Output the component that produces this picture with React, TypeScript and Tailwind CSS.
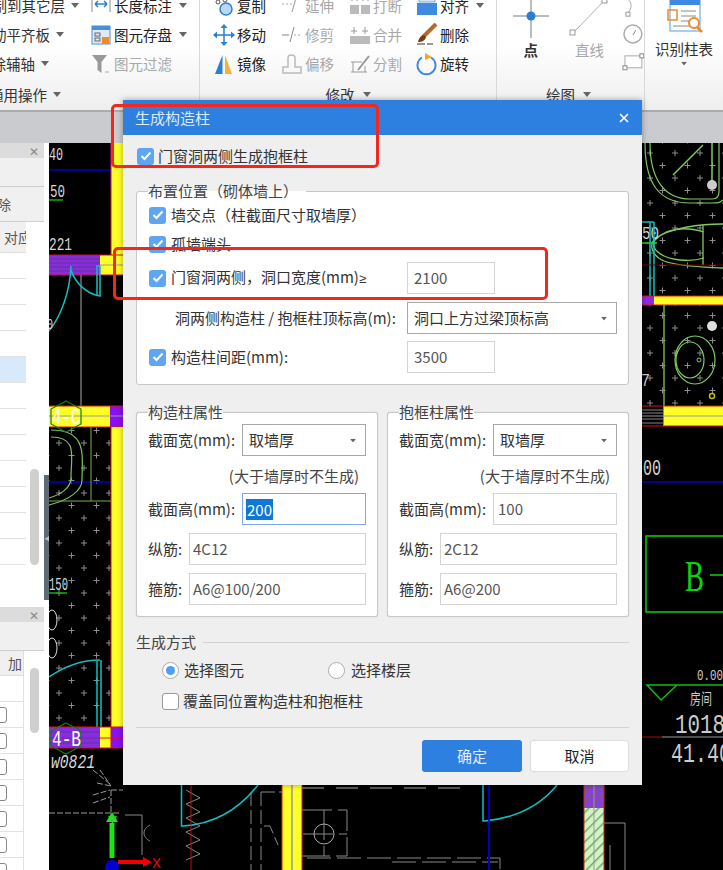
import React from "react";

const Caret = ({ className = "" }: { className?: string }) => (
  <svg width="8" height="5" viewBox="0 0 8 5" className={`shrink-0 ${className}`}>
    <path d="M0 0h8L4 5z" fill="#666" />
  </svg>
);

const Check = () => (
  <span className="flex h-[17px] w-[17px] shrink-0 items-center justify-center rounded-[3px] bg-[#5ea6f2]">
    <svg width="12" height="10" viewBox="0 0 12 10">
      <path d="M1.5 5l3 3 6-6.5" fill="none" stroke="#fff" strokeWidth="2" />
    </svg>
  </span>
);

const Field = ({ w, children, active }: { w: string; children?: React.ReactNode; active?: boolean }) => (
  <div
    className={`flex h-[32px] items-center border bg-white pl-[3px] text-[#555] ${w} ${
      active ? "border-[#7ea6e8]" : "border-[#d4d4d4]"
    }`}
  >
    {children}
  </div>
);

const Select = ({ w, children }: { w: string; children: React.ReactNode }) => (
  <div className={`flex h-[32px] items-center justify-between border border-[#a8a8a8] bg-white pl-[6px] pr-[8px] ${w}`}>
    <span className="text-[#333]">{children}</span>
    <Caret className="scale-75" />
  </div>
);

const Prop = ({
  title,
  height,
  main,
  stir,
  active,
  grow,
}: {
  title: string;
  height: string;
  main: string;
  stir: string;
  active?: boolean;
  grow: string;
}) => (
  <div className={`relative h-[205px] rounded-[3px] border border-[#c8c8c8] bg-white px-[11px] pt-[11px] shadow-[0_0_1px_#bbb] ${grow}`}>
    <span className="absolute left-[11px] top-[-12px] bg-gradient-to-b from-[#efefef] from-50% to-white to-50% leading-[22px] text-[#444]">
      {title}
    </span>
    <div className="flex items-center justify-between">
      <span>截面宽(mm):</span>
      <Select w="w-[124px]">取墙厚</Select>
    </div>
    <div className="mt-[6px] flex h-[28px] items-center justify-end pr-[7px] text-[#444]">(大于墙厚时不生成)</div>
    <div className="mt-[3px] flex items-center justify-between">
      <span>截面高(mm):</span>
      <Field w="w-[124px]" active={active}>
        {active ? (
          <span className="bg-[#0f78d4] px-[1px] leading-[21px] text-white">{height}</span>
        ) : (
          <span className="pl-[1px]">{height}</span>
        )}
      </Field>
    </div>
    <div className="mt-[8px] flex items-center justify-between">
      <span>纵筋:</span>
      <Field w="w-[177px]">{main}</Field>
    </div>
    <div className="mt-[8px] flex items-center justify-between">
      <span>箍筋:</span>
      <Field w="w-[177px]">{stir}</Field>
    </div>
  </div>
);

const RTool = ({
  icon,
  label,
  gray,
  caret,
  className = "",
}: {
  icon: React.ReactNode;
  label: string;
  gray?: boolean;
  caret?: boolean;
  className?: string;
}) => (
  <div className={`flex h-[29px] items-center ${className}`}>
    <span className="flex h-[22px] w-[24px] shrink-0 items-center justify-center">{icon}</span>
    <span className={`ml-[1px] whitespace-nowrap ${gray ? "text-[#a8a8a8]" : "text-[#222]"}`}>{label}</span>
    {caret && <Caret className="ml-[7px]" />}
  </div>
);

const IconLen = () => (
  <svg width="20" height="20" viewBox="0 0 20 20">
    <path d="M1 2v14M19 2v14" stroke="#888" />
    <path d="M4 8h12M4 8l3-3M4 8l3 3M16 8l-3-3M16 8l-3 3" stroke="#2a7fd4" strokeWidth="1.5" fill="none" />
  </svg>
);
const IconSave = () => (
  <svg width="20" height="20" viewBox="0 0 20 20">
    <rect x="1" y="1" width="18" height="18" fill="#dfeaf7" stroke="#4a90d9" />
    <rect x="1" y="1" width="18" height="4" fill="#4a90d9" />
    <rect x="4" y="8" width="5" height="3" fill="none" stroke="#666" />
    <rect x="4" y="13" width="5" height="3" fill="none" stroke="#666" />
    <rect x="11" y="12" width="7" height="7" fill="#f08a24" />
  </svg>
);
const IconFilter = () => (
  <svg width="20" height="20" viewBox="0 0 20 20">
    <path d="M1 1h15l-5.500 7v11l-4-3V8z" fill="#999" />
    <path d="M14 18h4" stroke="#aaa" />
  </svg>
);
const IconCopy = () => (
  <svg width="20" height="20" viewBox="0 0 20 20">
    <circle cx="12" cy="13" r="6" fill="#bcd7f2" stroke="#2f7fcf" strokeWidth="1.5" />
    <circle cx="11" cy="4" r="2" fill="none" stroke="#555" />
    <circle cx="4" cy="6" r="2" fill="none" stroke="#555" />
  </svg>
);
const IconMove = () => (
  <svg width="22" height="22" viewBox="0 0 22 22">
    <path d="M11 4v14M4 11h14" stroke="#2a7fd4" strokeWidth="1.5" />
    <path d="M11 0l3.500 4h-7zM11 22l3.500-4h-7zM0 11l4-3.500v7zM22 11l-4-3.500v7z" fill="#2a7fd4" />
  </svg>
);
const IconMirror = () => (
  <svg width="22" height="22" viewBox="0 0 22 22">
    <path d="M9.500 2v19H2z" fill="#2a7fd4" />
    <path d="M12 2v19h7z" fill="#f5b335" />
  </svg>
);
const IconExtend = () => (
  <svg width="22" height="22" viewBox="0 0 22 22">
    <path d="M1 9h11" stroke="#aaa" strokeDasharray="2 2" />
    <path d="M15 3l5-3M15 3l-4 14" stroke="#999" fill="none" />
  </svg>
);
const IconTrim = () => (
  <svg width="22" height="22" viewBox="0 0 22 22">
    <path d="M1 11h7" stroke="#888" />
    <path d="M13 11h8" stroke="#aaa" strokeDasharray="2 2" />
    <path d="M13 3l-4 15" stroke="#888" />
  </svg>
);
const IconOffset = () => (
  <svg width="22" height="22" viewBox="0 0 22 22">
    <path d="M2 20v-6h5V5c0-4 7-4 7 0v9h6v6z" fill="none" stroke="#bbb" strokeWidth="1.5" />
  </svg>
);
const IconBreak = () => (
  <svg width="22" height="22" viewBox="0 0 22 22">
    <rect x="1" y="10" width="9" height="9" fill="#bbb" />
    <rect x="12" y="10" width="9" height="9" fill="#bbb" />
    <path d="M3 3v4M8 3v4M14 3v4M19 3v4" stroke="#999" strokeDasharray="1 1" />
  </svg>
);
const IconMerge = () => (
  <svg width="22" height="22" viewBox="0 0 22 22">
    <rect x="1" y="12" width="20" height="8" fill="#bbb" />
    <path d="M5 3v7M2 7h6M16 3v7M13 7h6" stroke="#999" />
  </svg>
);
const IconSplit = () => (
  <svg width="22" height="22" viewBox="0 0 22 22">
    <path d="M2 9h11M2 19h16M4 9v10M16 13v6" stroke="#999" fill="none" />
    <path d="M9 17L20 3" stroke="#999" strokeWidth="2" />
  </svg>
);
const IconAlign = () => (
  <svg width="22" height="26" viewBox="0 0 22 26">
    <rect x="3" y="0" width="16" height="9" fill="#d5e5f6" stroke="#7aa9d9" />
    <rect x="1" y="10" width="20" height="12" fill="#3d8ae0" />
  </svg>
);
const IconDelete = () => (
  <svg width="22" height="24" viewBox="0 0 22 24">
    <path d="M20 1L7 14" stroke="#b56a28" strokeWidth="4" />
    <path d="M8 12c-3 0-5 3-6 7 4 0 7-1 8-5z" fill="#7a3b10" />
    <path d="M1 21h16" stroke="#333" strokeDasharray="8 2" />
  </svg>
);
const IconRotate = () => (
  <svg width="22" height="24" viewBox="0 0 22 24">
    <path d="M6 5.500a9 9 0 1 0 9 0" fill="none" stroke="#3d8ae0" strokeWidth="2" />
    <path d="M9 1l7 4-7 3z" fill="#f5a623" />
  </svg>
);

const plainRows = [253, 280, 306, 332, 359, 385, 411, 437, 463, 490, 516, 542];

const T = ({
  x,
  y,
  w,
  s,
  fill = "#d8d8d8",
  children,
  className,
}: {
  x: number;
  y: number;
  w: number;
  s: number;
  fill?: string;
  children: string;
  className?: string;
}) => (
  <text x={x} y={y} fontSize={s} fill={fill} textLength={w} lengthAdjust="spacingAndGlyphs" className={className}>
    {children}
  </text>
);

const Cad = () => (
  <svg width="674" height="727" viewBox="49 143 674 727" className="block font-['Liberation_Mono',monospace]">
    <defs>
      <pattern id="plusL" x="53" y="512" width="25" height="25" patternUnits="userSpaceOnUse">
        <path d="M6 3v6M3 6h6M18.500 15.500v6M15.500 18.500h6" stroke="#8c8c8c" />
      </pattern>
      <pattern id="plusR" x="644" y="147" width="25" height="25" patternUnits="userSpaceOnUse">
        <path d="M6 3v6M3 6h6M18.500 15.500v6M15.500 18.500h6" stroke="#8c8c8c" />
      </pattern>
      <pattern id="hatchG" width="7" height="7" patternUnits="userSpaceOnUse" patternTransform="rotate(45)">
        <rect width="7" height="7" fill="#d8f0c8" />
        <path d="M0 0v7" stroke="#5fb35f" strokeWidth="3" />
      </pattern>
      <pattern id="hatchP" width="7" height="7" patternUnits="userSpaceOnUse" patternTransform="rotate(45)">
        <rect width="7" height="7" fill="#8a3fd8" />
        <path d="M0 0v7" stroke="#6a6a3a" strokeWidth="2" />
      </pattern>
    </defs>
    <rect x="49" y="143" width="674" height="727" fill="#000" />
    <rect x="49" y="427" width="62" height="298" fill="url(#plusL)" />
    <rect x="642" y="143" width="81" height="153" fill="url(#plusR)" />
    <rect x="642" y="305" width="81" height="101" fill="url(#plusR)" />

    {/* left walls */}
    <path d="M49 170H111M111 143V187M49 482H122" stroke="#0000c8" strokeWidth="1.5" fill="none" />
    <rect x="111" y="143" width="12" height="112" fill="#ffff28" />
    <path d="M111 143V255" stroke="#e01010" />
    <rect x="49" y="255" width="51" height="20" fill="#8a2be2" />
    <path d="M49 259H100M49 263H100M49 267H100M49 271H100" stroke="#5a3a8a" />
    <rect x="100" y="255" width="23" height="20" fill="#ffff28" />
    <path d="M49 255H123M49 275H123" stroke="#c01030" />
    <path d="M100 265H123" stroke="#999" />
    <path d="M81 275V406" stroke="#aaa" />
    <path d="M71 266C70 290 62 315 49 331" stroke="#10c0c0" strokeWidth="1.5" fill="none" />
    <path d="M71 270C76 285 88 294 100 296V266H97V296" stroke="#10c0c0" strokeWidth="1.5" fill="none" />
    <path d="M49 200H63M49 593H67" stroke="#10b010" strokeWidth="1.5" />
    <rect x="49" y="406" width="61" height="21" fill="#ffff28" />
    <rect x="110" y="406" width="13" height="21" fill="#8a10f0" />
    <path d="M49 406H123M49 427H123" stroke="#e01010" />
    <path d="M49 416H123" stroke="#999" />
    <rect x="111" y="427" width="12" height="300" fill="#ffff28" />
    <path d="M111 427V727" stroke="#e01010" />
    <path d="M51 430C88 430 82 456 82 480C82 490 70 500 49 505M51 437C78 437 71 456 71 478C71 488 60 495 49 498" stroke="#80c060" strokeWidth="1.2" fill="none" />
    <path d="M91 427V501M49 501H111" stroke="#70b050" fill="none" />
    <path d="M66 401L81 409V424L66 432L51 424V409Z" stroke="#108010" strokeWidth="1.2" fill="none" />
    <T x={52} y={424} w={28} s={22} fill="#fff">4-C</T>
    <T x={49} y={160} w={14} s={19}>40</T>
    <T x={50} y={197} w={15} s={18}>50</T>
    <T x={49} y={250} w={23} s={19}>221</T>
    <T x={49} y={590} w={19} s={18}>150</T>
    <T x={47} y={329} w={6} s={15}>0</T>
    <ellipse cx="52" cy="620" rx="5" ry="10" stroke="#ddd" fill="none" />
    <ellipse cx="52" cy="648" rx="5" ry="10" stroke="#ddd" fill="none" />
    <path d="M49 677C65 666 82 660 100 660H97V737H101V660" stroke="#10c0c0" strokeWidth="1.5" fill="none" />
    <rect x="49" y="727" width="51" height="21" fill="#8a2be2" />
    <path d="M49 732H100M49 738H100M49 743H100" stroke="#5a3a8a" />
    <rect x="100" y="727" width="11" height="21" fill="#ffff28" />
    <rect x="111" y="727" width="12" height="21" fill="#8a10f0" />
    <path d="M49 727H123M49 748H123M100 738H123M111 727V748" stroke="#e01010" />
    <path d="M66 723L81 731V746L66 754L51 746V731Z" stroke="#108010" strokeWidth="1.2" fill="none" />
    <T x={52} y={746} w={29} s={22} fill="#fff">4-B</T>
    <T x={51} y={768} w={44} s={21} className="italic">w0821</T>
    <path d="M93 770l17 14M97 783l14 3M93 795l17-5M93 803l17-6M100 770l11 16M111 790v24M111 790h12M49 813H120" stroke="#999" strokeDasharray="6 2" fill="none" />
    <path d="M112 823V858" stroke="#20e020" strokeWidth="5" />
    <path d="M112 812l-6 10h12z" fill="#20e020" />
    <T x={108} y={826} w={9} s={15} fill="#20e020">Y</T>
    <circle cx="112" cy="867" r="7" fill="#0000d0" />
    <path d="M118 862H145" stroke="#f00000" strokeWidth="4" />
    <path d="M152 862l-9-5v10z" fill="#f00000" />
    <T x={152} y={868} w={9} s={14} fill="#f00000">X</T>

    {/* bottom */}
    <path d="M181.500 785V826H183C215 824 240 808 258 785" stroke="#10c0c0" strokeWidth="1.5" fill="none" />
    <path d="M186 790l14 8-14 6 14 8-14 6 14 8-14 6 14 8-14 6 14 8-14 6" stroke="#888" fill="none" />
    <path d="M191 785V870" stroke="#c01010" />
    <path d="M125 815h17v40M150 825c-8 4-8 12 0 16" stroke="#888" fill="none" />
    <rect x="282" y="785" width="20" height="85" fill="#ffff28" />
    <path d="M282 785V870M302 785V870" stroke="#e02010" />
    <path d="M292 785V870" stroke="#999" strokeWidth="1.5" />
    <path d="M302 788H462" stroke="#777" strokeWidth="1.5" strokeDasharray="22 12" />
    <path d="M302 810H347V856H302M303 834H347M324 810V856" stroke="#888" strokeDasharray="30 6" fill="none" />
    <circle cx="324" cy="834" r="10" stroke="#aaa" fill="none" />
    <path d="M307 858H500V870M392 862H498" stroke="#888" strokeDasharray="24 6" fill="none" />
    <path d="M251 792V870M261 792V870M261 792H282M264 826H270L278 845" stroke="#888" strokeDasharray="14 4" fill="none" />
    <path d="M483 785V821H485C515 818 540 806 557 785" stroke="#10c0c0" strokeWidth="1.5" fill="none" />
    <path d="M489 785V870" stroke="#0000c8" strokeWidth="2" />
    <rect x="584" y="785" width="20" height="23" fill="url(#hatchP)" />
    <rect x="584" y="808" width="20" height="62" fill="url(#hatchG)" />
    <path d="M584 785V870M604 785V870" stroke="#c03010" />
    <path d="M594 785V870" stroke="#999" />
    <path d="M604 823H625V870M610 845V870" stroke="#888" fill="none" />

    {/* right */}
    <path d="M645 143C645 185 660 203 690 203H712C718 203 720 203 723 200M650 143C650 180 665 199 690 199H712C717 199 719 197 719 192V143" stroke="#80c860" strokeWidth="1.2" fill="none" />
    <path d="M673 175L703 145M712 143V185" stroke="#80c860" strokeWidth="1.5" />
    <circle cx="712" cy="185" r="5" fill="#ccc" />
    <path d="M723 224C700 224 670 228 656 238C648 244 652 256 664 261C680 267 705 267 723 268M703 225V265M704 232C680 225 665 230 655 240C650 248 660 258 680 260C690 261 698 260 704 258" stroke="#80c860" strokeWidth="1.3" fill="none" />
    <T x={642} y={239} w={17} s={19}>50</T>
    <path d="M642 243H657" stroke="#20e020" strokeWidth="1.5" />
    <path d="M650 222V303M654 222V303M642 222H654" stroke="#10c0c0" strokeWidth="1.5" fill="none" />
    <path d="M642 265H723" stroke="#700000" />
    <rect x="642" y="296" width="12" height="9" fill="#8a2be2" />
    <rect x="654" y="296" width="69" height="9" fill="#ffff28" />
    <path d="M642 296H723M642 305H723" stroke="#e01010" />
    <path d="M664 305V406" stroke="#70b050" strokeWidth="1.5" />
    <ellipse cx="695" cy="360" rx="20" ry="24" stroke="#80c860" fill="none" strokeWidth="1.2" />
    <ellipse cx="690" cy="360" rx="14" ry="18" stroke="#80c860" fill="none" strokeWidth="1.2" />
    <circle cx="699" cy="360" r="2" stroke="#80c860" fill="none" />
    <circle cx="712" cy="326" r="5" fill="#ddd" />
    <circle cx="712" cy="396" r="2.500" stroke="#c0c000" strokeWidth="1.5" fill="none" />
    <T x={641} y={386} w={9} s={19} fill="#ccc">7</T>
    <rect x="664" y="406" width="59" height="20" fill="#ffff28" />
    <path d="M642 406H723M642 426H723" stroke="#e01010" />
    <path d="M642 416H723" stroke="#999" />
    <path d="M642 410H664M642 413H664M642 419H664M642 423H664" stroke="#888" />
    <path d="M663.500 406V426" stroke="#10c0c0" />
    <T x={643} y={475} w={18} s={22}>00</T>
    <path d="M642 482H723" stroke="#0000c8" strokeWidth="1.5" />
    <path d="M723 536H646V612H723" stroke="#10d010" strokeWidth="1.5" fill="none" />
    <T x={685} y={591} w={19} s={44} fill="#10d010" className="font-['Liberation_Serif',serif]">B</T>
    <path d="M710 575H723" stroke="#10d010" strokeWidth="1.5" />
    <T x={697} y={680} w={26} s={15} fill="#ccc">0.00</T>
    <path d="M723 685H647L661 700L677 685" stroke="#10c010" strokeWidth="1.5" fill="none" />
    <T x={690} y={704} w={22} s={15} fill="#ccc" className="font-['Noto_Sans_CJK_SC',sans-serif]">房间</T>
    <T x={675} y={733} w={50} s={27} fill="#ccc">1018</T>
    <path d="M642 737H662" stroke="#a01010" />
    <path d="M662 737H723" stroke="#999" />
    <T x={671} y={762} w={60} s={27} fill="#ccc">41.40</T>
  </svg>
);

export default function App() {
  return (
    <div className="relative h-[870px] w-[723px] overflow-hidden bg-black font-['Noto_Sans_CJK_SC',sans-serif] text-[15px] leading-[20px] text-[#333]">
      {/* ribbon */}
      <header className="flex h-[110px] overflow-hidden bg-gradient-to-b from-white from-40% to-[#eeeeee] text-[14.500px]">
        <div className="flex h-full w-[200px] flex-col border-r border-[#d8d8d8]">
          <div className="mt-[-9px] flex">
            <div className="flex w-[86px] flex-col items-end">
              <div className="flex h-[29px] items-center whitespace-nowrap pr-[7px]">
                制到其它层<Caret className="ml-[6px]" />
              </div>
              <div className="flex h-[29px] items-center whitespace-nowrap pr-[22px]">
                动平齐板<Caret className="ml-[6px]" />
              </div>
              <div className="flex h-[29px] items-center whitespace-nowrap pr-[37px]">
                除辅轴<Caret className="ml-[6px]" />
              </div>
            </div>
            <div className="ml-[3px] flex flex-col">
              <RTool icon={<IconLen />} label="长度标注" caret />
              <RTool icon={<IconSave />} label="图元存盘" caret />
              <RTool icon={<IconFilter />} label="图元过滤" gray />
            </div>
          </div>
          <div className="mt-[2px] flex h-[29px] items-center whitespace-nowrap">
            <span className="ml-[-11px]">通用操作</span>
            <Caret className="ml-[6px]" />
          </div>
        </div>
        <div className="flex h-full w-[297px] flex-col border-r border-[#d8d8d8]">
          <div className="mt-[-9px] flex pl-[12px]">
            <div className="flex w-[68px] flex-col">
              <RTool icon={<IconCopy />} label="复制" />
              <RTool icon={<IconMove />} label="移动" />
              <RTool icon={<IconMirror />} label="镜像" />
            </div>
            <div className="flex w-[68px] flex-col">
              <RTool icon={<IconExtend />} label="延伸" gray />
              <RTool icon={<IconTrim />} label="修剪" gray />
              <RTool icon={<IconOffset />} label="偏移" gray />
            </div>
            <div className="flex w-[67px] flex-col">
              <RTool icon={<IconBreak />} label="打断" gray />
              <RTool icon={<IconMerge />} label="合并" gray />
              <RTool icon={<IconSplit />} label="分割" gray />
            </div>
            <div className="flex flex-col">
              <RTool icon={<IconAlign />} label="对齐" caret />
              <RTool icon={<IconDelete />} label="删除" />
              <RTool icon={<IconRotate />} label="旋转" />
            </div>
          </div>
          <div className="mt-[2px] flex h-[29px] items-center justify-center">
            修改<Caret className="ml-[8px]" />
          </div>
        </div>
        <div className="flex h-full w-[148px] flex-col border-r border-[#d8d8d8]">
          <div className="flex h-[79px]">
            <div className="mt-[-2px] flex w-[62px] flex-col items-center pl-[6px]">
              <svg width="40" height="44" viewBox="0 0 40 44">
                <path d="M20 0V40M2 18H38" stroke="#a0a8b0" strokeWidth="1.5" />
                <circle cx="20" cy="18" r="4.500" fill="#2a7fd4" />
              </svg>
              <span className="mt-[-2px] font-bold">点</span>
            </div>
            <div className="mt-[-2px] flex w-[62px] flex-col items-center">
              <svg width="40" height="44" viewBox="0 0 40 44">
                <path d="M4 35L36 2" stroke="#b0b0b0" />
                <rect x="1" y="32" width="5" height="5" fill="#fff" stroke="#999" />
                <rect x="33" y="0" width="5" height="5" fill="#fff" stroke="#999" />
              </svg>
              <span className="mt-[-2px] text-[#a8a8a8]">直线</span>
            </div>
            <svg width="24" height="79" viewBox="0 0 24 79" className="mt-[-2px]">
              <path d="M9 2C12 5 12 10 8 15" stroke="#aaa" fill="none" />
              <rect x="6" y="14" width="4" height="4" fill="#fff" stroke="#999" />
              <circle cx="13" cy="36" r="9" fill="#fff" stroke="#aaa" strokeWidth="1.5" />
              <path d="M13 37l3-5" stroke="#888" />
              <rect x="5" y="58" width="17" height="12" fill="#fff" stroke="#aaa" />
              <rect x="3" y="68" width="4" height="4" fill="#fff" stroke="#888" />
              <rect x="20" y="56" width="4" height="4" fill="#fff" stroke="#888" />
            </svg>
          </div>
          <div className="mt-[1px] flex h-[29px] items-center justify-center pr-[4px]">
            绘图<Caret className="ml-[8px]" />
          </div>
        </div>
        <div className="flex flex-1 flex-col items-center">
          <svg width="38" height="35" viewBox="0 0 38 35" className="mt-[-1px] ml-[3px]">
            <rect x="3" y="1" width="30" height="31" fill="#fff" stroke="#5a9ad8" />
            <rect x="3" y="1" width="30" height="5" fill="#3d8ae0" />
            <path d="M14 12h15M14 17h15M14 22h8M6 27h18" stroke="#888" />
            <rect x="1" y="11" width="9" height="10" fill="none" stroke="#ef8a2c" strokeWidth="1.5" />
            <circle cx="27" cy="24" r="5" fill="#fff" stroke="#ef8a2c" strokeWidth="2" />
            <path d="M30 28l5 5" stroke="#ef8a2c" strokeWidth="2.500" />
          </svg>
          <span className="mt-[6px] whitespace-nowrap leading-[18px]">识别柱表</span>
          <Caret className="mt-[3px] scale-75" />
        </div>
      </header>
      {/* tab strip */}
      <div className="h-[33px] border-t-2 border-[#a9abad] bg-[#c9cbce]" />
      {/* workspace */}
      <div className="flex h-[727px]">
        <aside className="flex w-[49px] shrink-0 flex-col overflow-hidden bg-white text-[14px]">
          <div className="relative h-[457px] shrink-0">
            <div className="flex h-[15px] w-[44px] items-center justify-end bg-[#dcdcdc] pr-[5px] text-[#888]">
              <span className="text-[12px] leading-none">✕</span>
            </div>
            <div className="h-[29px] w-[44px] border-b border-[#cfcfcf] bg-[#f0f0f0]" />
            <div className="flex h-[35px] w-[44px] items-center overflow-hidden border-b border-[#cfcfcf] bg-[#f0f0f0] text-[#555]">
              <span className="ml-[-3px]">除</span>
            </div>
            <div className="flex h-[31px] w-[26px] items-center overflow-hidden whitespace-nowrap border-b border-[#ddd] bg-[#f0f0f0] pl-[4px] text-[#555]">
              对应
            </div>
            {plainRows.map((y) => (
              <div
                key={y}
                className={`h-[26px] w-[26px] border-b border-[#e2e2e2] ${y === 359 ? "bg-[#d8e9fb]" : ""}`}
              />
            ))}
            <div className="absolute left-[30px] top-[326px] h-[96px] w-[9px] rounded-full bg-[#cfcfcf]" />
            <div className="absolute left-[44px] top-[332px] flex h-[125px] w-[5px] items-center bg-[#5e6a76] text-[7px] text-[#bbb]">
              ◀
            </div>
          </div>
          <div className="h-[7px] shrink-0" />
          <div className="relative flex-1">
            <div className="flex h-[15px] w-[44px] items-center justify-end bg-[#dcdcdc] pr-[5px] text-[#888]">
              <span className="text-[12px] leading-none">✕</span>
            </div>
            <div className="h-[29px] w-[44px] border-b border-[#cfcfcf] bg-[#f0f0f0]" />
            <div className="flex h-[25px] w-[24px] items-center justify-end overflow-hidden whitespace-nowrap border-b border-r border-[#ddd] bg-[#f0f0f0] pr-[1px] text-[#555]">
              加
            </div>
            <div className="h-[26px] w-[24px] border-b border-r border-[#e2e2e2]" />
            {[0, 1, 2, 3, 4, 5, 6].map((i) => (
              <div key={i} className="flex h-[26px] w-[24px] items-center overflow-hidden border-b border-r border-[#e2e2e2]">
                <span className="ml-[-9px] h-[16px] w-[16px] shrink-0 rounded-[3px] border border-[#888] bg-white" />
              </div>
            ))}
            <div className="absolute left-[30px] top-[61px] h-[65px] w-[9px] rounded-full bg-[#cfcfcf]" />
          </div>
        </aside>
        <div className="flex-1">
          <Cad />
        </div>
      </div>

      {/* dialog */}
      <div className="absolute left-[123px] top-[100px] h-[685px] w-[519px] bg-[#efefef] shadow-[0_0_6px_rgba(0,0,0,0.35)]">
        <div className="flex h-[35px] items-center justify-between bg-[#2d7fe0] pl-[12px] pr-[13px] text-[#dcebfb]">
          <span>生成构造柱</span>
          <svg width="10" height="10" viewBox="0 0 10 10">
            <path d="M1 1l8 8M9 1l-8 8" stroke="#fff" strokeWidth="1.6" />
          </svg>
        </div>
        <div className="px-[13px]">
          <div className="mt-[11px] flex h-[20px] items-center gap-[4px] pl-[1px]">
            <Check />
            门窗洞两侧生成抱框柱
          </div>
          {/* placement */}
          <div className="relative mt-[25px] h-[194px] w-[493px] rounded-[3px] border border-[#c8c8c8] bg-white pl-[12px] pr-[11px]">
            <span className="absolute left-[11px] top-[-12px] bg-gradient-to-b from-[#efefef] from-50% to-white to-50% pr-[8px] leading-[22px] text-[#444]">
              布置位置（砌体墙上）
            </span>
            <div className="mt-[13px] flex h-[20px] items-center gap-[5px]">
              <Check />
              墙交点（柱截面尺寸取墙厚）
            </div>
            <div className="mt-[9px] flex h-[20px] items-center gap-[5px]">
              <Check />
              孤墙端头
            </div>
            <div className="mt-[8px] flex h-[32px] items-center">
              <Check />
              <span className="ml-[5px] w-[236px] whitespace-nowrap">
                门窗洞两侧，洞口宽度(mm)<span className="font-['Liberation_Sans',sans-serif] text-[13px]">≥</span>
              </span>
              <Field w="w-[88px]">
                <span className="pl-[3px]">2100</span>
              </Field>
            </div>
            <div className="mt-[8px] flex h-[32px] items-center">
              <span className="ml-[26px] w-[232px] whitespace-nowrap">洞两侧构造柱 / 抱框柱顶标高(m):</span>
              <Select w="w-[210px]">洞口上方过梁顶标高</Select>
            </div>
            <div className="mt-[7px] flex h-[32px] items-center">
              <Check />
              <span className="ml-[5px] w-[236px]">构造柱间距(mm):</span>
              <Field w="w-[88px]">
                <span className="pl-[3px]">3500</span>
              </Field>
            </div>
          </div>
          {/* props */}
          <div className="mt-[27px] flex w-[493px] gap-[9px]">
            <Prop title="构造柱属性" height="200" main="4C12" stir="A6@100/200" active grow="w-[242px]" />
            <Prop title="抱框柱属性" height="100" main="2C12" stir="A6@200" grow="w-[242px]" />
          </div>
          {/* mode */}
          <div className="mt-[15px] flex h-[20px] w-[493px] items-center gap-[7px]">
            <span className="text-[#444]">生成方式</span>
            <span className="h-[1px] flex-1 bg-[#d2d2d2]" />
          </div>
          <div className="mt-[8px] flex h-[20px] items-center pl-[26px]">
            <span className="flex h-[17px] w-[17px] items-center justify-center rounded-full border border-[#aaa] bg-white">
              <span className="h-[9px] w-[9px] rounded-full bg-[#4f9df5]" />
            </span>
            <span className="ml-[5px] w-[144px]">选择图元</span>
            <span className="h-[17px] w-[17px] rounded-full border border-[#aaa] bg-white" />
            <span className="ml-[6px]">选择楼层</span>
          </div>
          <div className="mt-[11px] flex h-[20px] items-center gap-[4px] pl-[26px]">
            <span className="h-[17px] w-[17px] rounded-[3px] border border-[#999] bg-white" />
            覆盖同位置构造柱和抱框柱
          </div>
          <div className="mt-[16px] h-[1px] w-[493px] bg-[#d2d2d2]" />
          <div className="mt-[12px] flex w-[493px] justify-end gap-[8px]">
            <div className="flex h-[32px] w-[100px] items-center justify-center rounded-[3px] bg-[#2d7fe0] text-[#e4effb]">确定</div>
            <div className="flex h-[32px] w-[99px] items-center justify-center rounded-[3px] border border-[#ddd] bg-white text-[#222]">取消</div>
          </div>
        </div>
      </div>

      {/* annotations */}
      <div className="absolute left-[111px] top-[104px] h-[64px] w-[268px] rounded-[5px] border-[3px] border-[#f5261c]" />
      <div className="absolute left-[113px] top-[247px] h-[53px] w-[435px] rounded-[5px] border-[3px] border-[#f5261c]" />
    </div>
  );
}
